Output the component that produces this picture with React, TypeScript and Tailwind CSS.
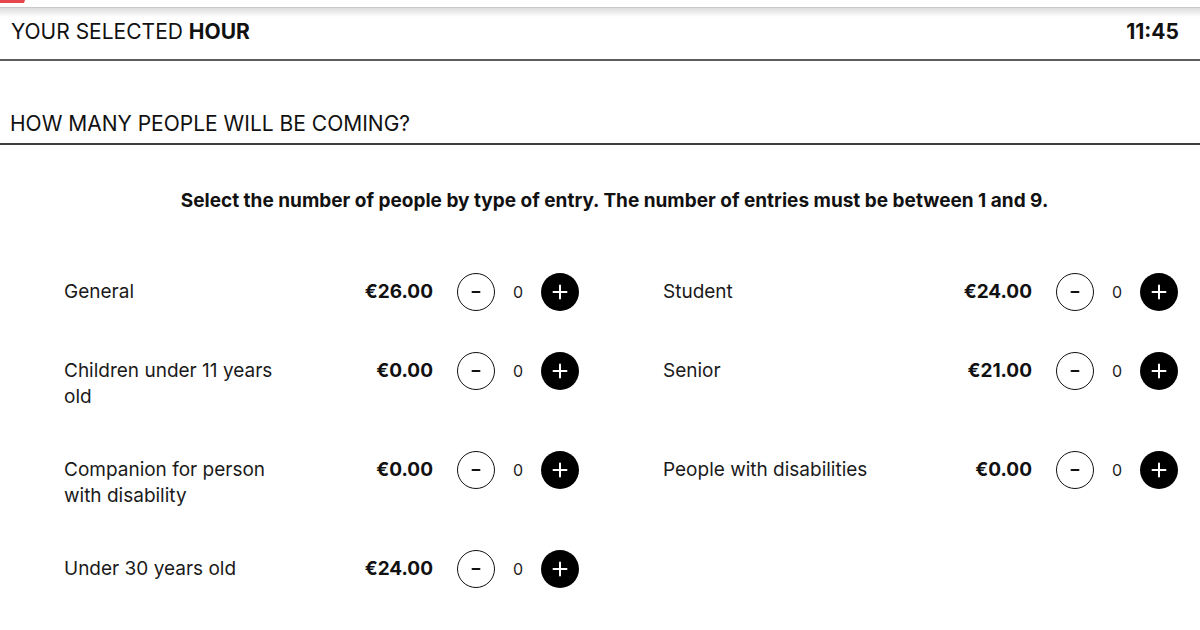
import React from "react";

type Entry = { label: string; price: string };

const entries: Entry[] = [
  { label: "General", price: "€26.00" },
  { label: "Student", price: "€24.00" },
  { label: "Children under 11 years old", price: "€0.00" },
  { label: "Senior", price: "€21.00" },
  { label: "Companion for person with disability", price: "€0.00" },
  { label: "People with disabilities", price: "€0.00" },
  { label: "Under 30 years old", price: "€24.00" },
];

function MinusIcon() {
  return (
    <svg width="10" height="10" viewBox="0 0 10 10" aria-hidden="true">
      <path d="M1.5 5h7" stroke="currentColor" strokeWidth="2" strokeLinecap="round" />
    </svg>
  );
}

function PlusIcon() {
  return (
    <svg width="16" height="16" viewBox="0 0 16 16" aria-hidden="true">
      <path d="M8 1.5v13M1.5 8h13" stroke="currentColor" strokeWidth="2" strokeLinecap="round" />
    </svg>
  );
}

function EntryRow({ entry }: { entry: Entry }) {
  return (
    <div className="flex items-start">
      <div className="w-[222px] pt-[6px] text-[19px] leading-[26px] text-[#1a1a1a]">{entry.label}</div>
      <div className="flex-1 text-right text-[19px] font-bold leading-[38px] text-[#111]">{entry.price}</div>
      <button
        className="ml-[24px] flex h-[38px] w-[38px] shrink-0 items-center justify-center rounded-full border border-[#111] bg-white text-[#111]"
        aria-label="Remove"
      >
        <MinusIcon />
      </button>
      <span className="w-[46px] text-center text-[16px] leading-[38px] text-[#222]">0</span>
      <button
        className="flex h-[38px] w-[38px] shrink-0 items-center justify-center rounded-full bg-black text-white"
        aria-label="Add"
      >
        <PlusIcon />
      </button>
    </div>
  );
}

export default function App() {
  return (
    <div
      className="h-[630px] w-[1200px] overflow-hidden bg-white text-[#111]"
      style={{ fontFamily: "Inter, 'Noto Sans', sans-serif" }}
    >
      {/* cut-off logo strip */}
      <div className="h-[7px] bg-white">
        <svg width="26" height="4" viewBox="0 0 26 4" aria-hidden="true">
          <path d="M0 0h25l-1 3H0z" fill="#e3262f" opacity="0.85" />
        </svg>
      </div>
      <div className="h-[10px] border-t border-[#c8c8c8] bg-gradient-to-b from-[#dcdcdc] to-white" />

      {/* selected hour */}
      <header className="flex h-[42px] items-start justify-between pl-[11px] pr-[21px] pt-[1px] text-[21px] leading-[28px]">
        <span>
          YOUR SELECTED <span className="font-bold">HOUR</span>
        </span>
        <span className="font-bold">11:45</span>
      </header>
      <div className="h-[2px] bg-[#5c5c5c]" />

      {/* people */}
      <h2 className="pl-[10px] pt-[49px] pb-[5px] text-[21px] leading-[28px] font-normal">
        HOW MANY PEOPLE WILL BE COMING?
      </h2>
      <div className="h-[2px] bg-[#3c3c3c]" />

      <p className="pl-[29px] pt-[43px] text-center text-[19px] font-bold leading-[26px]">
        Select the number of people by type of entry. The number of entries must be between 1 and 9.
      </p>

      <div className="grid grid-cols-[515px_515px] gap-x-[84px] gap-y-[41px] pl-[64px] pt-[59px]">
        {entries.map((e) => (
          <EntryRow key={e.label} entry={e} />
        ))}
      </div>
    </div>
  );
}
